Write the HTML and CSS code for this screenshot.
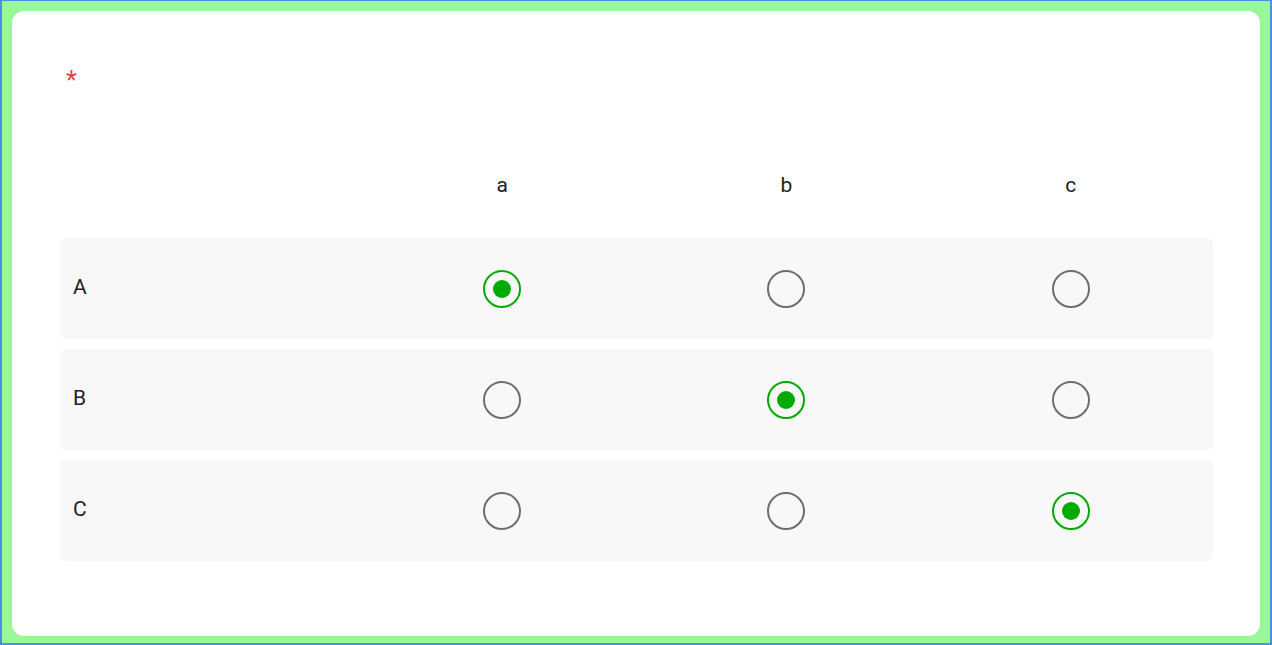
FILE: index.html
```html
<!DOCTYPE html>
<html lang="en">
<head>
  <meta charset="UTF-8">
  <title>Grid question</title>
  <link rel="stylesheet" href="styles.css">
</head>
<body>

<div class="card">
  <!-- Question title (required) -->
  <div class="title"><span class="required">*</span></div>

  <!-- Column headers -->
  <div class="grid-head">
    <div></div>
    <div class="col-label">a</div>
    <div class="col-label">b</div>
    <div class="col-label">c</div>
  </div>

  <!-- Rows -->
  <div class="grid-row">
    <div class="row-label">A</div>
    <div class="cell"><span class="radio checked"></span></div>
    <div class="cell"><span class="radio"></span></div>
    <div class="cell"><span class="radio"></span></div>
  </div>
  <div class="grid-row">
    <div class="row-label">B</div>
    <div class="cell"><span class="radio"></span></div>
    <div class="cell"><span class="radio checked"></span></div>
    <div class="cell"><span class="radio"></span></div>
  </div>
  <div class="grid-row">
    <div class="row-label">C</div>
    <div class="cell"><span class="radio"></span></div>
    <div class="cell"><span class="radio"></span></div>
    <div class="cell"><span class="radio checked"></span></div>
  </div>
</div>

</body>
</html>
```

FILE: styles.css
```css
html, body { height: 100%; }

body {
  margin: 0;
  box-sizing: border-box;
  border: 2px solid #4a8fe2;
  border-top-width: 1px;
  padding: 10px 10px 7px 10px;
  background: #98f898;
  font-family: Roboto, "Liberation Sans", sans-serif;
  color: #202124;
}

.card {
  height: 100%;
  box-sizing: border-box;
  background: #fff;
  border-radius: 12px;
  padding: 56px 47px 0 48px;
}

.title {
  height: 93px;
  padding-left: 6px;
}

.required {
  color: #e0443c;
  font-size: 25px;
  line-height: 28px;
}

.grid-head,
.grid-row {
  display: grid;
  grid-template-columns: 300px 1fr 1fr 1fr;
  align-items: center;
}

.grid-head {
  height: 50px;
  margin-bottom: 28px;
}

.col-label {
  text-align: center;
  font-size: 21px;
}

.grid-row {
  height: 101px;
  margin-bottom: 10px;
  background: #f8f8f8;
  border-radius: 6px;
}

.row-label {
  padding: 0 0 4px 13px;
  font-size: 21px;
}

.cell {
  display: flex;
  justify-content: center;
}

/* radio buttons */
.radio {
  width: 38px;
  height: 38px;
  box-sizing: border-box;
  border: 2px solid #6e6e6e;
  border-radius: 50%;
  display: flex;
  align-items: center;
  justify-content: center;
}

.radio.checked { border-color: #00aa00; }

.radio.checked::after {
  content: "";
  width: 18px;
  height: 18px;
  border-radius: 50%;
  background: #00aa00;
}
```
